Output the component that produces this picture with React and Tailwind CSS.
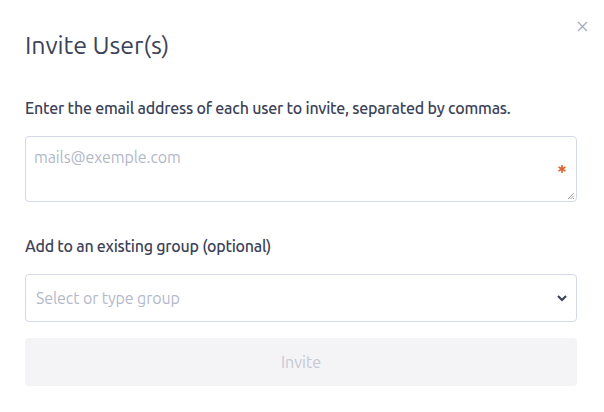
export default function App() {
  return (
    <div className="relative w-[604px] h-[412px] bg-white font-['Ubuntu','Noto_Sans',sans-serif] text-[#3c4257]">
      <button className="absolute right-[16px] top-[20px] w-[12px] h-[12px] flex items-center justify-center">
        <svg width="11" height="11" viewBox="0 0 11 11" fill="none">
          <path d="M1 1L10 10M10 1L1 10" stroke="#a8adbd" strokeWidth="1.3" />
        </svg>
      </button>
      <div className="pl-[25px] pr-[27px] pt-[29px] flex flex-col">
        <h1 className="text-[25px] leading-[32px] font-normal text-[#3c4257] tracking-[-0.1px]">Invite User(s)</h1>
        <p className="mt-[37px] text-[16px] leading-[20px] font-medium tracking-[-0.22px]">Enter the email address of each user to invite, separated by commas.</p>
        <div className="relative mt-[18px] h-[66px] border border-[#d5d9e6] rounded-[4px]">
          <div className="pl-[8px] pt-[10px] text-[16px] leading-[20px] tracking-[-0.1px] text-[#b3b8c9]">mails@exemple.com</div>
          <svg className="absolute right-[9px] top-[27px]" width="10" height="10" viewBox="0 0 10 10" fill="none">
            <path d="M5 1V9M1.5 3L8.5 7M8.5 3L1.5 7" stroke="#e0622e" strokeWidth="1.6" />
          </svg>
          <svg className="absolute right-[1px] bottom-[1px]" width="8" height="8" viewBox="0 0 8 8">
            <path d="M7 1L1 7M7 3.5L3.5 7M7 6L6 7" stroke="#8a8a8a" strokeWidth="0.8" />
          </svg>
        </div>
        <p className="mt-[34px] text-[16px] leading-[20px] font-medium tracking-[-0.25px]">Add to an existing group (optional)</p>
        <div className="mt-[18px] h-[48px] border border-[#d5d9e6] rounded-[4px] flex items-center justify-between pl-[10px] pr-[8px]">
          <span className="text-[16px] tracking-[-0.1px] text-[#b3b8c9]">Select or type group</span>
          <svg width="12" height="10" viewBox="0 0 12 10" fill="none">
            <path d="M2 3L6 7L10 3" stroke="#3c4257" strokeWidth="2.2" />
          </svg>
        </div>
        <button className="mt-[16px] h-[48px] bg-[#f4f4f6] rounded-[4px] text-[16px] text-[#c5c9d3]">Invite</button>
      </div>
    </div>
  );
}
